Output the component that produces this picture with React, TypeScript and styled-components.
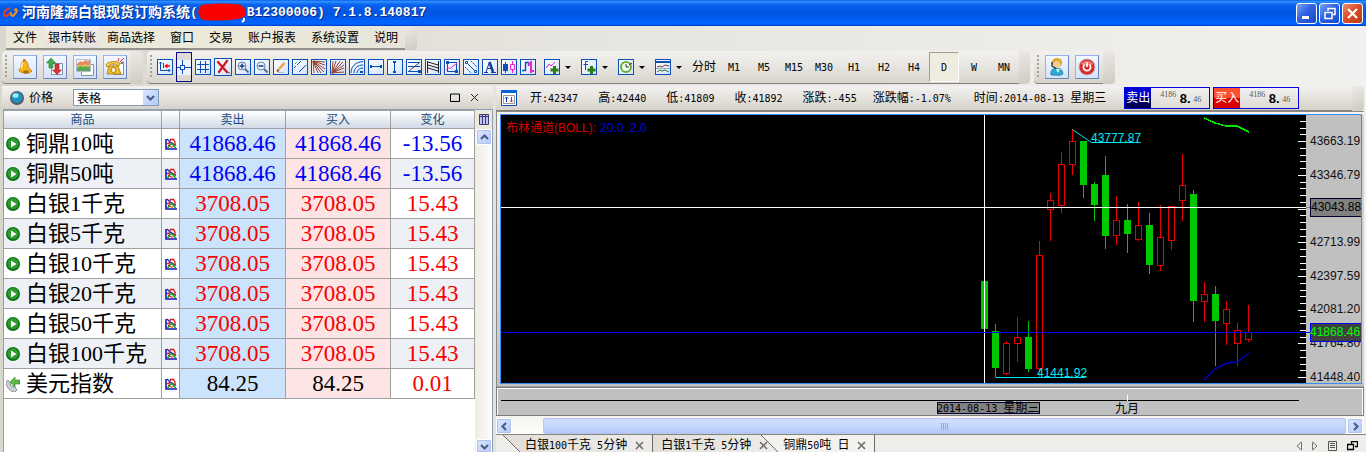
import React from 'react';
import styled, { createGlobalStyle, css } from 'styled-components';

const CJK = '"Noto Sans CJK SC", sans-serif';
const HEAD_BG = 'linear-gradient(#f3f2f0, #e6e3de 50%, #d6d2ca)';
const BAR_BG = 'linear-gradient(#f2f1ee, #e8e6e2 45%, #d8d4cc)';

const GlobalStyle = createGlobalStyle`
  * { box-sizing: border-box; }
  body {
    margin: 0;
    overflow: hidden;
    background: #ebe9e4;
    color: #000;
    font: 12px/16px "Liberation Sans", ${CJK};
  }
  button { margin: 0; padding: 0; border: 0; background: none; color: inherit; font: inherit; }
  svg { display: block; flex: none; }
`;

const Mono = styled.span`
  font-family: "DejaVu Sans Mono", monospace;
  font-size: 10px;
`;

const Page = styled.div`
  display: flex;
  flex-direction: column;
  min-height: 100vh;
  min-width: 1180px;
  background: linear-gradient(90deg, #d9d6cd, #e6e4de 40%, #f2f1ef);
`;

/* Title bar */
const TitleBar = styled.header`
  display: flex;
  align-items: center;
  height: 26px;
  padding: 0 3px 0 2px;
  color: #fff;
  background: linear-gradient(#0a5ce8 0, #2b90ff 6%, #0a62ee 18%, #0054e0 50%, #0060f8 80%, #0064ff 92%, #003dc8 100%);
`;
const TitleText = styled.h1`
  display: flex;
  align-items: center;
  flex: 1;
  margin: 0 0 0 4px;
  font: bold 14px/20px "Liberation Mono", ${CJK};
  text-shadow: 1px 1px 0 #0a2a80;
  white-space: pre;
`;
const TitleCode = styled.span`
  font-size: 13px;
`;
const WindowButtons = styled.div`
  display: flex;
  gap: 2px;
`;
const WindowButton = styled.button<{ $close?: boolean }>`
  display: grid;
  place-items: center;
  width: 21px;
  height: 21px;
  border: 1px solid #fff;
  border-radius: 3px;
  background: ${(p) =>
    p.$close
      ? 'linear-gradient(135deg, #e8906c, #dc4c28 45%, #c03a10)'
      : 'linear-gradient(135deg, #7aa4f4, #2f62e0 45%, #1848c8)'};
`;

/* Menu */
const MenuRow = styled.nav`
  display: flex;
  height: 25px;
  padding: 0 0 1px 6px;
`;
const MenuBar = styled.div`
  display: flex;
  gap: 1px;
  height: 24px;
  background: linear-gradient(90deg, #ebe8d9, #eceada 60%, #e7e4dc);
  border-bottom: 2px solid #94928c;
`;
const MenuItem = styled.button<{ $hot?: boolean }>`
  height: 22px;
  padding: 1px ${(p) => (p.$hot ? 3 : 7)}px 0;
  background: ${(p) => (p.$hot ? 'linear-gradient(#f2f1ef, #e4e1dc)' : 'none')};
`;
const BarCap = styled.div<{ $width: number }>`
  width: ${(p) => p.$width}px;
  border-radius: 0 4px 4px 0;
  background: linear-gradient(160deg, #eceae7, #d0cabf);
`;

/* Tool bars */
const ToolRow = styled.div`
  display: flex;
  gap: 4px;
  height: 35px;
  padding: 0 0 2px 2px;
`;
const ToolBar = styled.div`
  display: flex;
  height: 33px;
`;
const ToolBody = styled.div<{ $gap: number; $end: number }>`
  display: flex;
  align-items: center;
  gap: ${(p) => p.$gap}px;
  padding: 0 ${(p) => p.$end}px 0 3px;
  border-radius: 4px 0 0 4px;
  border-bottom: 1px solid #85837e;
  background: ${BAR_BG};
`;
const Gripper = styled.span<{ $space: number }>`
  width: 2px;
  height: 24px;
  margin-right: ${(p) => p.$space}px;
  background: repeating-linear-gradient(#a4a19a 0 2px, transparent 2px 4px);
`;
const BigTool = styled.button`
  display: grid;
  place-items: center;
  width: 24px;
  height: 24px;
  border: 1px solid;
  border-color: #93b4f0 #6c84b8 #6c84b8 #93b4f0;
  background: linear-gradient(#f4f8ff, #d4e2fa);
`;
const Tool = styled.button<{ $active?: boolean; $large?: boolean }>`
  display: grid;
  place-items: center;
  width: ${(p) => (p.$large ? 18 : 16)}px;
  height: ${(p) => (p.$large ? 18 : 16)}px;
  overflow: hidden;
  border: 1px solid #0a50b8;
  background: linear-gradient(135deg, #fff, #d2e2fb);
  ${(p) =>
    p.$active &&
    css`
      height: 30px;
      border-color: #0a0a80;
      background: linear-gradient(#dedcd8 0 7px, #eef4ff 7px 22px, #dad7d0 22px);
    `}
`;
const MenuTools = styled.div`
  display: flex;
  align-items: center;
  gap: 6px;
  margin-left: 5px;
`;
const DropTool = styled.div`
  display: flex;
  align-items: center;
  gap: 5px;
  width: 31px;
`;
const Caret = styled.span`
  border: 3px solid transparent;
  border-top-color: #000;
  border-bottom: 0;
`;
const Periods = styled.div`
  display: flex;
`;
const Period = styled.button<{ $active?: boolean }>`
  width: 30px;
  height: 30px;
  white-space: nowrap;
  ${(p) =>
    p.$active &&
    css`
      border: 1px solid;
      border-color: #a09d8c #fff #fff #a09d8c;
      background: #efecdf;
    `}
`;

/* Panels */
const Workspace = styled.main`
  display: flex;
  flex: 1;
  gap: 3px;
  padding: 0 2px;
`;
const PricePanel = styled.section`
  display: flex;
  flex-direction: column;
  flex: 0 0 491px;
`;
const PriceHead = styled.div`
  display: flex;
  align-items: center;
  height: 23px;
  padding: 0 14px 0 8px;
  background: ${HEAD_BG};
`;
const PriceTitle = styled.label`
  width: 44px;
  margin-left: 5px;
`;
const SelectBox = styled.div`
  display: flex;
  width: 86px;
  height: 17px;
  margin-right: auto;
  border: 1px solid #7f9db9;
  background: #fff;
`;
const Select = styled.select`
  flex: 1;
  min-width: 0;
  padding: 0 0 0 3px;
  border: 0;
  outline: 0;
  background: #fff;
  color: #000;
  font: 12px/15px ${CJK};
  appearance: none;
`;
const SelectArrow = styled.span`
  display: grid;
  place-items: center;
  width: 15px;
  background: linear-gradient(135deg, #dbe6ff, #b4c8f6);
  pointer-events: none;
`;
const PanelButton = styled.button`
  margin-left: 10px;
`;
const PriceBody = styled.div`
  display: flex;
  flex: 1;
  align-items: stretch;
  margin-left: 1px;
  border: 1px solid #8ba1b8;
  border-bottom: 0;
  background: #fff;
`;
const TableArea = styled.div`
  flex: 1;
`;
const Table = styled.table`
  width: 471px;
  table-layout: fixed;
  border-spacing: 0;
  font-family: "Liberation Serif", ${CJK};
`;
const Th = styled.th`
  height: 19px;
  padding: 0;
  border: solid #a0a0a0;
  border-width: 1px 1px 1px 0;
  background: linear-gradient(#fff, #e8ecf2 50%, #d3dae6);
  color: #174a7c;
  font-weight: normal;
  line-height: 16px;
`;
const tints = { none: 'transparent', sell: '#cbe3fb', buy: '#fde5e5' };
const Tr = styled.tr`
  background: #fff;
  &:nth-child(even) { background: #edf1f5; }
`;
const Td = styled.td<{ $tint?: keyof typeof tints; $color?: string }>`
  height: 30px;
  padding: 0;
  border: solid #a0a0a0;
  border-width: 0 1px 1px 0;
  background: ${(p) => tints[p.$tint || 'none']};
  color: ${(p) => p.$color || '#000'};
  font-size: 23px;
  line-height: 29px;
  text-align: center;
`;
const NameCell = styled.div`
  display: flex;
  align-items: center;
  gap: 6px;
  height: 29px;
  padding-left: 2px;
  font-size: 22px;
  white-space: nowrap;
`;
const IconCell = styled.div`
  display: grid;
  place-items: center;
`;
const ScrollColumn = styled.div`
  display: flex;
  flex-direction: column;
  justify-content: space-between;
  width: 17px;
  padding-left: 1px;
  background: linear-gradient(90deg, #eeece2, #fdfdfb);
`;
const ColumnPicker = styled.button`
  display: grid;
  place-items: center;
  width: 16px;
  height: 19px;
  background: #ece9d8;
`;
const ScrollButton = styled.button<{ $short?: boolean }>`
  display: grid;
  place-items: center;
  width: 16px;
  height: ${(p) => (p.$short ? 14 : 16)}px;
  border: 1px solid #fff;
  border-radius: 2px;
  box-shadow: inset 0 0 0 1px #b2c4ee;
  background: linear-gradient(135deg, #dce7ff, #b6caf8);
`;
const ScrollTop = styled.div`
  display: flex;
  flex-direction: column;
`;

/* Chart panel */
const ChartPanel = styled.section`
  display: flex;
  flex-direction: column;
  flex: 1;
  min-width: 0;
`;
const QuoteRow = styled.div`
  display: flex;
  height: 25px;
`;
const QuoteHead = styled.div`
  display: flex;
  align-items: center;
  flex: 1;
  padding-left: 5px;
  border-bottom: 1px solid #85837e;
  background: ${HEAD_BG};
  white-space: nowrap;
`;
const Stat = styled.span<{ $before: number }>`
  margin-left: ${(p) => p.$before}px;
`;
const Deal = styled.button<{ $before: number }>`
  display: flex;
  width: 86px;
  height: 22px;
  margin-left: ${(p) => p.$before}px;
  border: 1px solid #0000e0;
`;
const DealSide = styled.span<{ $buy?: boolean }>`
  width: 26px;
  height: 20px;
  line-height: 20px;
  color: #fff;
  text-align: center;
  background: ${(p) =>
    p.$buy
      ? 'linear-gradient(#ff5030 0 50%, #dc0000 50%)'
      : 'linear-gradient(#0000d0 0 50%, #000070 50%, #000048)'};
`;
const DealPrice = styled.span`
  display: flex;
  flex: 1;
  height: 20px;
  padding-left: 9px;
  background: linear-gradient(#f2f1ef, #dedbd5);
  color: #555;
  font: 8px/14px "Liberation Serif", serif;
`;
const DealMain = styled.b`
  width: 16px;
  margin-left: 1px;
  color: #000;
  font: bold 13px/22px "Liberation Sans", sans-serif;
`;
const DealTail = styled.span`
  line-height: 24px;
`;
const ChartFrame = styled.div`
  padding: 3px 2px 3px 4px;
  background: linear-gradient(#f4f4f2, #c4c2be);
  box-shadow: inset 1px 1px 0 #8c8a86, inset 0 -1px 0 #a4a29e;
`;
const ChartBox = styled.div`
  display: flex;
  justify-content: flex-end;
  border: 1px solid #3a8ff2;
  background: #000;
`;
const TimeStrip = styled.div`
  display: flex;
  justify-content: flex-end;
  border: 1px solid #7c7c7c;
  background: #c0c0c0;
  box-shadow: inset 1px 1px 0 #fff, inset -1px 0 0 #fff;
`;
const HScroll = styled.div`
  display: flex;
  height: 18px;
  padding: 2px 1px 0 0;
  background: linear-gradient(#f4f3ee, #fcfcfa);
`;
const Thumb = styled.button`
  display: flex;
  align-items: center;
  justify-content: center;
  flex: 1;
  gap: 1px;
  margin: 0 1px 0 31px;
  border: 1px solid #b8c8f0;
  border-radius: 2px;
  background: linear-gradient(#d0ddfd, #c6d6fc 55%, #b2c6f6);
`;
const ThumbLine = styled.i`
  width: 1px;
  height: 7px;
  background: #8fa8e0;
`;
const TabRow = styled.div`
  display: flex;
  height: 19px;
  margin-right: -2px;
  border-top: 1px solid #85837e;
  background: #efedea;
`;
const tabStyles = {
  first: css`
    padding-left: 29px;
    border-right: 1px solid #6c6a66;
    background: linear-gradient(45deg, #efedea 17px, #6c6a66 17px 18px, #e2dfd9 18px, #efedea 100%);
  `,
  middle: css`
    padding-left: 8px;
    border-right: 1px solid transparent;
    background: linear-gradient(90deg, #e2dfd9, #efedea);
  `,
  active: css`
    margin-left: -23px;
    padding-left: 29px;
    border-right: 1px solid #6c6a66;
    background: linear-gradient(45deg, transparent 17px, #6c6a66 17px 18px, #f3f2ef 18px);
  `,
};
const Tab = styled.div<{ $kind: keyof typeof tabStyles }>`
  display: flex;
  align-items: center;
  gap: 8px;
  height: 18px;
  padding: 2px 8px 0 0;
  white-space: nowrap;
  ${(p) => tabStyles[p.$kind]}
`;
const TabActions = styled.div`
  display: flex;
  align-items: center;
  gap: 10px;
  margin-left: auto;
  padding: 3px 8px 0 0;
`;

const B = '#0b4fb5';
const glyph = (children: React.ReactNode, size = 14) => (
  <svg width={size} height={size} viewBox="0 0 14 14" fill="none" stroke={B} strokeWidth="1">
    {children}
  </svg>
);

const tools: { name: string; art: React.ReactNode; active?: boolean; large?: boolean }[] = [
  { name: '坐标', art: glyph(<><path d="M2.500 2v8.500H12M1 3.500L2.500 2 4 3.500M10.500 9L12 10.500 10.500 12M5.500 3v5" /><path d="M7 6h5" stroke="#f00" strokeWidth="1.500" /><path d="M6.500 6l3-2.500v5z" fill="#f00" stroke="none" /></>) },
  { name: '十字光标', active: true, art: glyph(<><path d="M5.500 0v5M5.500 10v4M0 7.500h3M8 7.500h6" /><rect x="3.500" y="5.500" width="4" height="4" fill="#fff" /></>) },
  { name: '网格', art: glyph(<path d="M4.500 1v12M9.500 1v12M1 4.500h12M1 9.500h12" />) },
  { name: '删除', large: true, art: glyph(<><path d="M2 2l9 10M11 1L3 12" stroke="#d01818" strokeWidth="2" /><path d="M11 12h2" stroke="#555" /></>, 16) },
  { name: '放大', art: glyph(<><circle cx="6" cy="6" r="4" fill="#e4f0ff" stroke="#6c849c" /><path d="M9 9l3.500 3.500" stroke="#58708c" strokeWidth="2" /><path d="M3.500 6h5M6 3.500v5" stroke="#103c80" strokeWidth="1.500" /></>) },
  { name: '缩小', art: glyph(<><circle cx="6" cy="6" r="4" fill="#e4f0ff" stroke="#6c849c" /><path d="M9 9l3.500 3.500" stroke="#58708c" strokeWidth="2" /><path d="M3.500 6h5" stroke="#103c80" strokeWidth="1.500" /></>) },
  { name: '画笔', art: glyph(<><path d="M5 9l5.500-6" stroke="#f0a030" strokeWidth="2.500" /><path d="M3 11.500l.700-2.200 1.500 1.500z" fill="#a04010" stroke="#a05020" /><path d="M4 12.500h6" stroke="#bbb" /></>) },
  { name: '平行线', art: glyph(<><path d="M1 8l2-2M4 5l4-4M6 12l7-7" /><path d="M2 4l2-2" strokeDasharray="1 1" /></>) },
  { name: '扇形线', art: glyph(<path d="M1 1l12 1M1 1l12 4M1 1l12 8M1 1l11 11M1 1l8 12M1 1l5 12M1 1l1 12" stroke="#93402c" />) },
  { name: '速阻线', art: glyph(<path d="M1 13L2 1M1 13L5 1M1 13L9 1M1 13L12 2M1 13l12-8M1 13l12-5M1 13l12-1" stroke="#93402c" />) },
  { name: '弧线', art: glyph(<><path d="M1 13C1 6 6 2 13 1.500M4 13c0-5 4-8 9-8M7 13c0-3 3-5 6-5" /><path d="M10 11h3v2h-3z" fill={B} stroke="none" /></>) },
  { name: '水平线', art: glyph(<><path d="M2 6.500h10" /><path d="M1 5h2v3H1zM11 5h2v3h-2z" fill={B} stroke="none" /></>) },
  { name: '垂直线', art: glyph(<><path d="M6.500 2v10" /><path d="M5 1h3v2H5zM5 11h3v2H5z" fill={B} stroke="none" /></>) },
  { name: '黄金分割', art: glyph(<><path d="M1 2.500h12M1 6.500h12M1 11.500h12" /><path d="M2 11L12 3" stroke="#444" /><path d="M11 10h3v3h-3z" fill={B} stroke="none" /></>) },
  { name: '回归带', art: glyph(<path d="M1.500 1v12M12.500 1v12M2 2l10 3M2 5l10 3M2 8l10 3" stroke="#202020" />) },
  { name: '矩形', art: glyph(<><rect x="2.500" y="2.500" width="9" height="9" /><path d="M1 10c3-4 4 0 6-3s3-1 5-4" stroke="#f020e0" /><path d="M1 1h3v3H1zM10 10h3v3h-3z" fill={B} stroke="none" /></>) },
  { name: '线段', art: glyph(<><path d="M3 3l8 8" /><path d="M7 1l6 6M1 7l6 6" strokeDasharray="2 1" /><path d="M1.500 1.500h2v2h-2zM10.500 10.500h2v2h-2z" fill="#fff" /></>) },
  { name: '文字', art: glyph(<><path d="M1 12.500h4M8 12.500h5M3 12L6.500 2M4.500 8.500h5" stroke="#123f90" /><path d="M6.500 2l3.500 10" strokeWidth="2.500" stroke="#123f90" /></>) },
  { name: 'K线', art: glyph(<><path d="M3.500 2v11" /><path d="M1 4h5v7H1z" fill={B} stroke="none" /><path d="M10.500 1v3M10.500 10v3M8.500 4.500h4v5h-4z" stroke="#f020d0" /></>) },
  { name: '美国线', art: glyph(<><path d="M1 10.500h3.500V2M4 2.500h3.500V6" strokeWidth="1.400" /><path d="M10 1v12M7 4h3M10 11h3" stroke="#f020d0" strokeWidth="2" /></>) },
];

const PLUS = <path d="M9.500 6v8M5.500 10h8" stroke="#2f7d16" strokeWidth="3" />;
const dropTools = [
  { name: '指标', art: glyph(<><path d="M1 8l3-4 2 2 4-4" stroke="#f020d0" />{PLUS}</>) },
  { name: '公式', art: glyph(<><path d="M6 1.500H3.500V10M1.500 4.500H6" />{PLUS}</>) },
  { name: '时间', art: glyph(<><circle cx="7" cy="7" r="5" fill="#f4fff0" stroke="#6aac3c" strokeWidth="2" /><path d="M7 4v3h3M10 5l3-2" stroke="#333" /></>) },
  { name: '模板', art: glyph(<><path d="M0 1h14v2H0z" fill={B} stroke="none" /><path d="M1 7l3-1 2 1 3-2 4 1" stroke="#803828" /><path d="M0 8.500h14" stroke="#9ab" /><path d="M1 12l3-2 2 1 3-1 4 2" stroke="#307030" /></>) },
];

const bigTools = [
  {
    name: '提醒',
    art: (
      <svg width="18" height="18" viewBox="0 0 18 18">
        <path d="M7 1h2.500v3H7z" fill="#c88010" />
        <path d="M8 3c4 0 4 3 4.500 6 .2 2 2.500 2 3.500 4-2 3-10 2.500-13 0-.5-2 2-2 2-5 0-3 1-5 3-5z" fill="#f4b41c" stroke="#b87408" strokeWidth=".7" />
        <path d="M7 4.500c-1.500 1.500-1 4-1.700 6" stroke="#fff0a0" strokeWidth="1.500" fill="none" />
        <ellipse cx="10" cy="14" rx="3" ry="1.800" fill="#b86c08" />
      </svg>
    ),
  },
  {
    name: '买卖',
    art: (
      <svg width="20" height="20" viewBox="0 0 20 20">
        <path d="M6.500 6.500h11v11h-11z" fill="#fff" stroke="#8494a8" />
        <path d="M6 1l4.500 5H8v5H4V6H1.500z" fill="#3fae4a" stroke="#237a2c" strokeWidth=".6" />
        <path d="M12 17.500L7.500 13H10V7h4v6h2.500z" fill="#d8323a" stroke="#9c1a20" strokeWidth=".6" />
      </svg>
    ),
  },
  {
    name: '走势',
    art: (
      <svg width="20" height="20" viewBox="0 0 20 20">
        <path d="M6.500 7.500h12v11h-12z" fill="#fff" stroke="#8494a8" />
        <path d="M1.500 2.500h14v12h-14z" fill="#f8fbff" stroke="#b0bcd0" />
        <path d="M2 14V7l3-3 3 1 2-2 3 1 2-1v11z" fill="#e88a60" />
        <path d="M2 14V9l3-1 3 1 2-2 3 2 2-2v7z" fill="#e8c860" />
        <path d="M2 14v-3l3-2 3 1 2-1 3 1 2-1v5z" fill="#58a850" />
      </svg>
    ),
  },
  {
    name: '电话',
    art: (
      <svg width="20" height="20" viewBox="0 0 20 20">
        <path d="M8.500 6.500h10v11h-10z" fill="#fff" stroke="#8494a8" />
        <path d="M4 9h9l3 8H2z" fill="#f0c030" stroke="#a87808" strokeWidth=".8" />
        <path d="M1 8c1-4 13-5 14-1l-1 2-3-1V7H6L5 9 2 10z" fill="#f8d050" stroke="#a87808" strokeWidth=".8" />
        <circle cx="8.500" cy="13" r="2.500" fill="#fff6d0" stroke="#a87808" />
        <path d="M13 4l1-3M15 5l4-4M16 6l3-1" stroke="#d03020" />
      </svg>
    ),
  },
];

const accountTools = [
  {
    name: '客服',
    art: (
      <svg width="18" height="20" viewBox="0 0 18 20">
        <path d="M3 18c-1-5 2-7 6-7s6 3 6 6l-3 1.500z" fill="#2aa8cc" stroke="#14789c" strokeWidth=".6" />
        <circle cx="9" cy="6.500" r="4.300" fill="#f4cc90" />
        <path d="M4 8c-1-5 2-7 5-7s6 2 5 6l-2 3c1-3 0-5-2-6-3 0-5 1-6 4z" fill="#e0ac30" />
        <path d="M4 5v4l4 2.500" stroke="#202840" strokeWidth="1.300" fill="none" />
        <path d="M8 12l2 4 2-4z" fill="#d8f4ff" />
      </svg>
    ),
  },
  {
    name: '退出',
    art: (
      <svg width="18" height="18" viewBox="0 0 18 18">
        <circle cx="9" cy="9" r="8" fill="#e02828" stroke="#b8b0b0" />
        <path d="M3 6c2-4 10-4 12 0-3 2-9 2-12 0z" fill="#f07c7c" />
        <path d="M6.500 6.500a3.600 3.600 0 1 0 5 0M9 4.500V9" stroke="#fff" strokeWidth="1.700" fill="none" />
      </svg>
    ),
  },
];

const PlayIcon = () => (
  <svg width="14" height="14" viewBox="0 0 14 14">
    <circle cx="7" cy="7" r="7" fill="#0c7414" />
    <circle cx="7" cy="6.500" r="5.500" fill="#2d9a32" />
    <path d="M5 3.500v7L10.500 7z" fill="#fff" />
  </svg>
);
const IndexIcon = () => (
  <svg width="14" height="16" viewBox="0 0 14 16">
    <path d="M0 6l2-2 2 3 1 3 4 1 2 3-2 2c-5 0-9-5-9-10z" fill="#c8ced4" stroke="#78828c" strokeWidth=".8" />
    <path d="M4 6l5-5v3h5v4H9v3z" fill="#5cb848" stroke="#2f8424" strokeWidth=".6" />
  </svg>
);
const ChartIcon = () => (
  <svg width="12" height="12" viewBox="0 0 12 12" fill="none">
    <path d="M1 1v10h11" stroke="#1414b8" strokeWidth="1.600" />
    <path d="M2 1l3 3 2 1 4 2.500" stroke="#2020c8" strokeWidth="1.300" />
    <path d="M2 5.500h2L5.500 1.500h3L10 4v3" stroke="#e01818" strokeWidth="1.300" />
    <path d="M2.500 10l3-4h2l3 4" stroke="#10a010" strokeWidth="1.500" />
    <path d="M3 7l3 2h2" stroke="#e01818" />
  </svg>
);
const Chevron = ({ turn }: { turn: 'up' | 'down' | 'left' | 'right' }) => {
  const d = { up: 'M1 6l3.500-3.500L8 6', down: 'M1 3l3.500 3.500L8 3', left: 'M6 1L2.500 4.500 6 8', right: 'M3 1l3.500 3.500L3 8' }[turn];
  return (
    <svg width="9" height="9" viewBox="0 0 9 9">
      <path d={d} fill="none" stroke="#46608c" strokeWidth="2.200" />
    </svg>
  );
};
const Cross = ({ color = '#6c6a64', thin }: { color?: string; thin?: boolean }) => (
  <svg width="9" height="9" viewBox="0 0 9 9">
    <path d="M1 1l7 7M8 1L1 8" stroke={color} strokeWidth={thin ? 1 : 1.5} />
  </svg>
);

const RED = '#f80000';
const BLUE = '#0000f8';
const rows: { name: string; price: string; change: string; color: string; changeColor: string; index?: boolean }[] = [
  ...['铜鼎10吨', '铜鼎50吨'].map((name) => ({ name, price: '41868.46', change: '-13.56', color: BLUE, changeColor: BLUE })),
  ...['白银1千克', '白银5千克', '白银10千克', '白银20千克', '白银50千克', '白银100千克'].map((name) => ({
    name, price: '3708.05', change: '15.43', color: RED, changeColor: RED,
  })),
  { name: '美元指数', price: '84.25', change: '0.01', color: '#000', changeColor: RED, index: true },
];

const menus = ['文件', '银市转账', '商品选择', '窗口', '交易', '账户报表', '系统设置', '说明'];
const periods = ['M1', 'M5', 'M15', 'M30', 'H1', 'H2', 'H4', 'D', 'W', 'MN'];
const stats: [string, string, number][] = [
  ['开', ':42347', 13],
  ['高', ':42440', 20],
  ['低', ':41809', 20],
  ['收', ':41892', 20],
  ['涨跌', ':-455', 20],
  ['涨跌幅', ':-1.07%', 16],
];

/* centre, rising?, body top, body bottom, wick top, wick bottom */
const candles: [number, boolean, number, number, number, number][] = [
  [984, false, 281, 329, 281, 329],
  [995, false, 331, 368, 324, 377],
  [1006, true, 343, 374, 341, 375],
  [1017, true, 337, 344, 317, 362],
  [1028, false, 337, 369, 321, 372],
  [1039, true, 255, 369, 241, 377],
  [1050, true, 200, 210, 193, 241],
  [1061, true, 164, 206, 152, 213],
  [1072, true, 141, 165, 129, 175],
  [1083, false, 141, 185, 141, 198],
  [1094, false, 184, 205, 182, 221],
  [1105, false, 175, 236, 156, 249],
  [1116, true, 220, 236, 196, 245],
  [1127, false, 220, 234, 204, 253],
  [1138, true, 225, 240, 202, 241],
  [1149, false, 225, 265, 213, 274],
  [1160, true, 237, 266, 205, 271],
  [1171, true, 206, 241, 206, 250],
  [1182, true, 185, 201, 154, 221],
  [1193, false, 194, 301, 190, 322],
  [1204, true, 294, 302, 282, 322],
  [1215, false, 294, 321, 286, 366],
  [1226, true, 309, 324, 301, 345],
  [1237, true, 330, 344, 323, 366],
  [1248, true, 332, 340, 305, 342],
];
const axis: [string, number][] = [
  ['43663.19', 141], ['43346.79', 175], ['42713.99', 242], ['42397.59', 276],
  ['42081.20', 309], ['41764.80', 343], ['41448.40', 377],
];
const ticks = Array.from({ length: 39 }, (_, i) => ({ y: Math.round(121 + i * 6.74), major: i % 5 === 3 }));

const ChartText = styled.text<{ $size?: number }>`
  font: ${(p) => p.$size || 12}px "Liberation Sans", ${CJK};
  white-space: pre;
`;

const PriceChart = () => (
  <svg width="860" height="268" viewBox="501 115 860 268" overflow="visible" shapeRendering="crispEdges">
    <ChartText x="506" y="132" fill="#d80000">布林通道(BOLL):</ChartText>
    <ChartText x="600" y="132" fill="#0000f0">20.0  2.0</ChartText>
    {candles.map(([x, up, top, bottom, high, low]) => (
      <g key={x} fill={up ? '#000' : '#00c800'} stroke={up ? '#e80000' : '#00c800'}>
        <path d={`M${x + 0.5} ${high}V${low}`} />
        <rect x={x - 2.5} y={top + 0.5} width="6" height={bottom - top - 1} />
      </g>
    ))}
    <g fill="none">
      <path d="M1204 118l11 5 11 3h11l12 6" stroke="#00e800" strokeWidth="1.500" />
      <path d="M1204 380l11-11 12-6 10-1 12-9" stroke="#0000c8" strokeWidth="1.500" shapeRendering="auto" />
      <path d="M1072.500 129.500l19 13h49M995.500 377.500h90" stroke="#00e8f0" shapeRendering="auto" />
      <path d="M984.500 115v268M501 207.500h805" stroke="#fff" />
      <path d="M501 332.500h805" stroke="#0000f0" />
    </g>
    <ChartText x="1091" y="142" fill="#00e8f0">43777.87</ChartText>
    <ChartText x="1037" y="377" fill="#00e8f0">41441.92</ChartText>
    <rect x="1306" y="115" width="55" height="268" fill="#c0c0c0" />
    <path d={ticks.map((t) => `M${t.major ? 1298 : 1300} ${t.y + 0.5}H1306`).join('')} stroke="#fff" />
    {axis.map(([label, y]) => (
      <ChartText key={label} x="1310" y={y + 4} fill="#111">{label}</ChartText>
    ))}
    <path d="M1306 207.500h4" stroke="#808080" />
    <path d="M1306 332.500h4" stroke="#0000f0" />
    <rect x="1310.500" y="198.500" width="52" height="18" fill="#808080" stroke="#000030" />
    <ChartText x="1311" y="211" fill="#000">43043.88</ChartText>
    <rect x="1310.500" y="323.500" width="52" height="18" fill="#404040" stroke="#0000f0" />
    <ChartText x="1310" y="336" fill="#00ff00">41868.46</ChartText>
    <path d="M1361.500 115v268" stroke="#3a8ff2" />
    <path d="M1363 115v268" stroke="#d4d2ce" strokeWidth="2" />
  </svg>
);

const TimeAxis = () => (
  <svg width="866" height="27" viewBox="497 388 866 27" shapeRendering="crispEdges">
    <path d="M501 400.500h798" stroke="#000" />
    <path d="M1127.500 395v6" stroke="#fff" />
    <rect x="937.500" y="402.500" width="102" height="11" fill="#808080" stroke="#000030" />
    <ChartText x="937" y="412" $size={10}>
      <tspan fontFamily="DejaVu Sans Mono">2014-08-13 </tspan>
      <tspan fontSize="12">星期三</tspan>
    </ChartText>
    <ChartText x="1115" y="413">九月</ChartText>
  </svg>
);

const DealButton = ({ side, buy, before }: { side: string; buy?: boolean; before: number }) => (
  <Deal $before={before}>
    <DealSide $buy={buy}>{side}</DealSide>
    <DealPrice>
      4186<DealMain>8.</DealMain><DealTail>46</DealTail>
    </DealPrice>
  </Deal>
);

export default function App() {
  return (
    <Page>
      <GlobalStyle />
      <TitleBar>
        <svg width="16" height="14" viewBox="0 0 16 14" fill="none">
          <path d="M8 2C4 3 1 7 2 9s4 1 6-2" stroke="#e8401c" strokeWidth="2" />
          <path d="M9 6c-1 3 1 5 3 3s3-4 3-5M12 4l3-1" stroke="#f89020" strokeWidth="2" />
        </svg>
        <TitleText>
          河南隆源白银现货订购系统<TitleCode>(</TitleCode>
          <svg width="49" height="20" viewBox="0 0 49 20">
            <path d="M4 2C16 0 34 0 43 2c5 3 6 9 3 12-8 4-30 4-41 3C-1 14-1 5 4 2z" fill="#fc0000" />
            <path d="M46 15v2l-2 2" stroke="#fff" strokeWidth="2" fill="none" />
          </svg>
          <TitleCode>B12300006) 7.1.8.140817</TitleCode>
        </TitleText>
        <WindowButtons>
          <WindowButton aria-label="最小化">
            <svg width="15" height="15"><path d="M3 11.500h7" stroke="#fff" strokeWidth="3" /></svg>
          </WindowButton>
          <WindowButton aria-label="还原">
            <svg width="15" height="15" fill="none" stroke="#fff"><path d="M6 5V2.500h7v6h-2" strokeWidth="1.500" /><path d="M3 6.500h7v6H3z" strokeWidth="1.500" /></svg>
          </WindowButton>
          <WindowButton $close aria-label="关闭">
            <svg width="15" height="15"><path d="M3 3l9 9M12 3l-9 9" stroke="#fff" strokeWidth="2.200" /></svg>
          </WindowButton>
        </WindowButtons>
      </TitleBar>

      <MenuRow>
        <MenuBar>
          {menus.map((m, i) => <MenuItem key={m} $hot={i === 1}>{m}</MenuItem>)}
        </MenuBar>
        <BarCap $width={12} />
      </MenuRow>

      <ToolRow>
        <ToolBar>
          <ToolBody $gap={6} $end={3}>
            <Gripper $space={0} />
            {bigTools.map((t) => <BigTool key={t.name} aria-label={t.name}>{t.art}</BigTool>)}
          </ToolBody>
          <BarCap $width={13} />
        </ToolBar>
        <ToolBar>
          <ToolBody $gap={3} $end={0}>
            <Gripper $space={2} />
            {tools.map((t) => (
              <Tool key={t.name} aria-label={t.name} $active={t.active} $large={t.large}>{t.art}</Tool>
            ))}
            <MenuTools>
              {dropTools.map((t) => (
                <DropTool key={t.name}>
                  <Tool aria-label={t.name}>{t.art}</Tool>
                  <Caret />
                </DropTool>
              ))}
            </MenuTools>
            <Periods>
              <Period>分时</Period>
              {periods.map((p) => <Period key={p} $active={p === 'D'}><Mono>{p}</Mono></Period>)}
            </Periods>
          </ToolBody>
          <BarCap $width={11} />
        </ToolBar>
        <ToolBar>
          <ToolBody $gap={6} $end={4}>
            <Gripper $space={0} />
            {accountTools.map((t) => <BigTool key={t.name} aria-label={t.name}>{t.art}</BigTool>)}
          </ToolBody>
          <BarCap $width={12} />
        </ToolBar>
      </ToolRow>

      <Workspace>
        <PricePanel>
          <PriceHead>
            <svg width="14" height="14" viewBox="0 0 14 14">
              <circle cx="7" cy="7" r="7" fill="#54585c" />
              <circle cx="7" cy="6.500" r="5.500" fill="#1c94c0" />
              <ellipse cx="5.500" cy="4.500" rx="3" ry="2.300" fill="#9cecff" />
            </svg>
            <PriceTitle htmlFor="view">价格</PriceTitle>
            <SelectBox>
              <Select id="view" defaultValue="表格"><option>表格</option></Select>
              <SelectArrow><Chevron turn="down" /></SelectArrow>
            </SelectBox>
            <PanelButton aria-label="最大化">
              <svg width="10" height="9"><path d="M.5 1h9v7.500h-9z" fill="none" stroke="#000" /></svg>
            </PanelButton>
            <PanelButton aria-label="关闭"><Cross color="#222" thin /></PanelButton>
          </PriceHead>
          <PriceBody>
            <TableArea>
              <Table>
                <colgroup>
                  <col width="158" /><col width="18" /><col width="106" /><col width="105" /><col width="84" />
                </colgroup>
                <thead>
                  <tr><Th>商品</Th><Th /><Th>卖出</Th><Th>买入</Th><Th>变化</Th></tr>
                </thead>
                <tbody>
                  {rows.map((r) => (
                    <Tr key={r.name}>
                      <Td><NameCell>{r.index ? <IndexIcon /> : <PlayIcon />}{r.name}</NameCell></Td>
                      <Td><IconCell><ChartIcon /></IconCell></Td>
                      <Td $tint="sell" $color={r.color}>{r.price}</Td>
                      <Td $tint="buy" $color={r.color}>{r.price}</Td>
                      <Td $color={r.changeColor}>{r.change}</Td>
                    </Tr>
                  ))}
                </tbody>
              </Table>
            </TableArea>
            <ScrollColumn>
              <ScrollTop>
                <ColumnPicker aria-label="选择列">
                  <svg width="10" height="11"><path d="M.5.5h9v10h-9zM3.500 0v11M6.500 0v11M0 2.500h10" fill="#c4c4ec" stroke="#3c3c78" /></svg>
                </ColumnPicker>
                <ScrollButton aria-label="向上"><Chevron turn="up" /></ScrollButton>
              </ScrollTop>
              <ScrollButton $short aria-label="向下"><Chevron turn="down" /></ScrollButton>
            </ScrollColumn>
          </PriceBody>
        </PricePanel>

        <ChartPanel>
          <QuoteRow>
            <QuoteHead>
              <svg width="16" height="16" viewBox="0 0 16 16">
                <path d="M.5.5h15v15H.5z" fill="#fff" stroke="#0a50b8" />
                <path d="M0 0h16v3H0z" fill="#0a64d8" />
                <path d="M2.500 5.500h11v8h-11z" fill="none" stroke="#9a9a9a" />
                <path d="M5.500 12V7M4 8.500L5.500 7 7 8.500" fill="none" stroke="#1030c0" />
                <path d="M10.500 7v5M9 10.500l1.500 1.500 1.500-1.500" fill="none" stroke="#d01030" />
              </svg>
              {stats.map(([label, value, before]) => (
                <Stat key={label} $before={before}>{label}<Mono>{value}</Mono></Stat>
              ))}
              <Stat $before={23}>时间<Mono>:2014-08-13 </Mono>星期三</Stat>
              <DealButton side="卖出" before={18} />
              <DealButton side="买入" buy before={3} />
            </QuoteHead>
            <BarCap $width={12} />
          </QuoteRow>
          <ChartFrame>
            <ChartBox><PriceChart /></ChartBox>
          </ChartFrame>
          <TimeStrip><TimeAxis /></TimeStrip>
          <HScroll>
            <ScrollButton aria-label="向左"><Chevron turn="left" /></ScrollButton>
            <Thumb aria-label="滚动条">
              <ThumbLine /><ThumbLine /><ThumbLine /><ThumbLine />
            </Thumb>
            <ScrollButton aria-label="向右"><Chevron turn="right" /></ScrollButton>
          </HScroll>
          <TabRow>
            <Tab $kind="first"><span>白银<Mono>100</Mono>千克<Mono> 5</Mono>分钟</span><Cross /></Tab>
            <Tab $kind="middle"><span>白银<Mono>1</Mono>千克<Mono> 5</Mono>分钟</span><Cross /></Tab>
            <Tab $kind="active"><span>铜鼎<Mono>50</Mono>吨<Mono> </Mono>日</span><Cross /></Tab>
            <TabActions>
              <svg width="6" height="10"><path d="M5.500 1v8L1 5z" fill="none" stroke="#77756f" /></svg>
              <svg width="6" height="10"><path d="M.5 1v8L5 5z" fill="none" stroke="#77756f" /></svg>
              <svg width="9" height="10"><path d="M.5.5h8v9h-8zM2 2.500h5M2 4.500h5M2 6.500h5" fill="none" stroke="#55534e" /></svg>
              <svg width="11" height="10"><path d="M4.500 3V.5h6v5H8M.5 3.500h6v5h-6z" fill="none" stroke="#000" strokeWidth="1.300" /></svg>
            </TabActions>
          </TabRow>
        </ChartPanel>
      </Workspace>
    </Page>
  );
}
